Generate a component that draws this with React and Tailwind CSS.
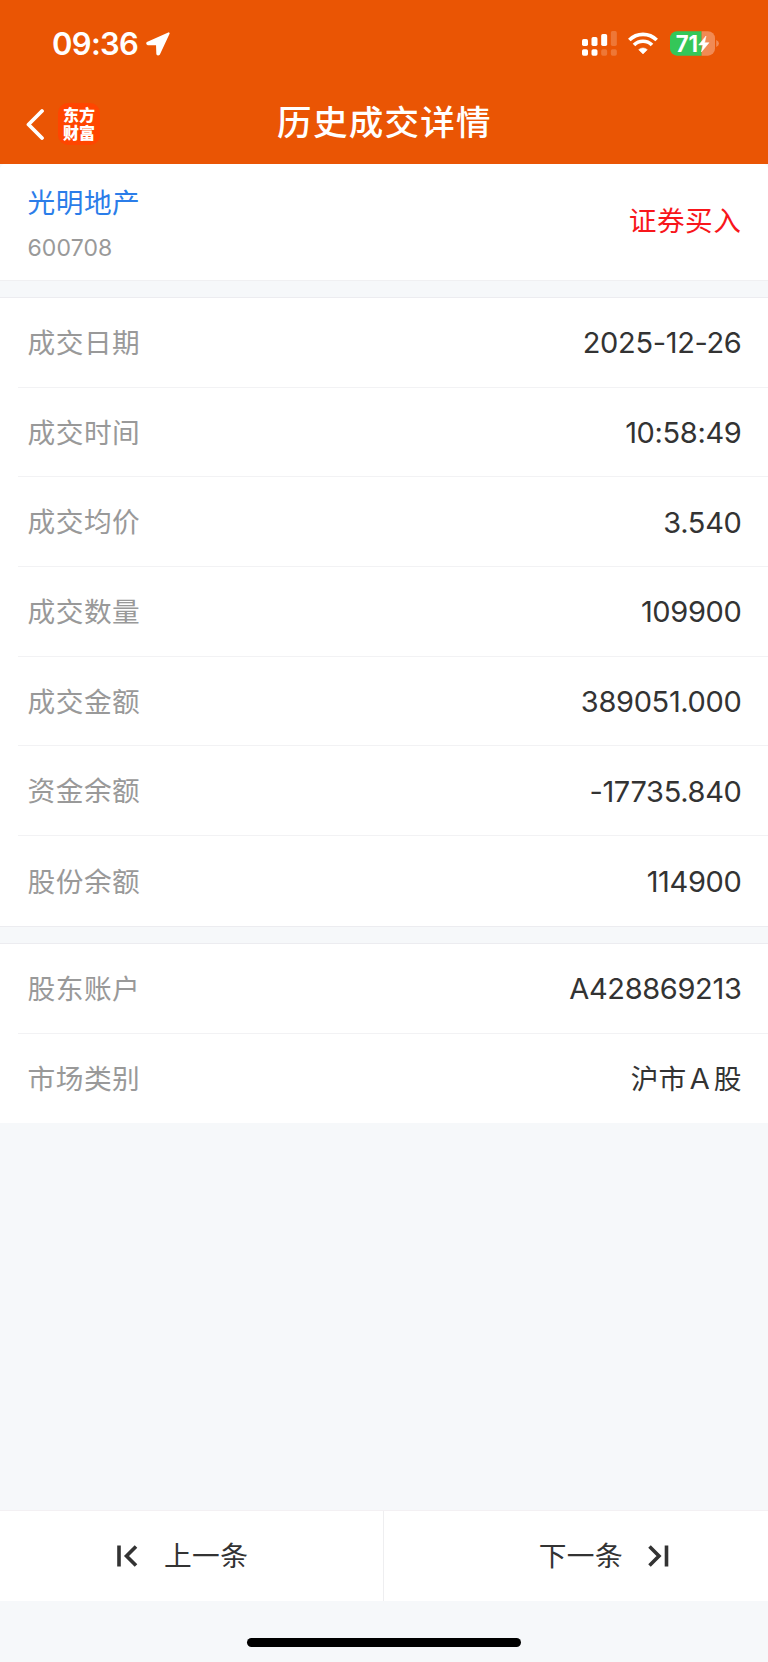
import React from 'react';

const tradeRows = [
  { label: '成交日期', value: '2025-12-26' },
  { label: '成交时间', value: '10:58:49' },
  { label: '成交均价', value: '3.540' },
  { label: '成交数量', value: '109900' },
  { label: '成交金额', value: '389051.000' },
  { label: '资金余额', value: '-17735.840' },
  { label: '股份余额', value: '114900' },
];

function SignalIcon() {
  return (
    <svg className="w-[35px] h-[25px]" viewBox="0 0 105 75" fill="#fff">
      <rect x="0" y="24" width="18" height="21" rx="5" />
      <rect x="28.5" y="18" width="18" height="27" rx="5" />
      <rect x="57.5" y="9" width="18" height="36" rx="5" />
      <rect x="86.5" y="0" width="18" height="45" rx="5" opacity="0.2" />
      <rect x="0" y="55" width="18" height="19" rx="5" />
      <rect x="28.5" y="55" width="18" height="19" rx="5" />
      <rect x="57.5" y="55" width="18" height="19" rx="5" opacity="0.2" />
      <rect x="86.5" y="55" width="18" height="19" rx="5" opacity="0.2" />
    </svg>
  );
}

function WifiIcon() {
  return (
    <svg className="ml-[11px] w-[30px] h-[23px]" viewBox="0 0 90 69" fill="none" stroke="#fff">
      <path d="M4 24 A58 58 0 0 1 86 24" strokeWidth="11" />
      <path d="M18 39 A38 38 0 0 1 72 39" strokeWidth="11" />
      <path d="M45 66 L32 53 A19 19 0 0 1 58 53 Z" fill="#fff" strokeWidth="1.500" strokeLinejoin="round" />
    </svg>
  );
}

function BatteryIcon() {
  return (
    <svg className="ml-[12px] w-[49px] h-[25px]" viewBox="0 0 147 75">
      <clipPath id="battery">
        <rect x="0" y="0.500" width="135" height="73.500" rx="21" />
      </clipPath>
      <g clipPath="url(#battery)">
        <rect width="95" height="75" fill="#34c759" />
        <rect x="95" width="40" height="75" fill="#f18a54" />
      </g>
      <path d="M138.500 27 Q147 31 147 37.500 Q147 44 138.500 48 Z" fill="#f18a54" />
      <text x="17" y="62" fill="#fff" fontFamily="Inter, sans-serif" fontWeight="700" fontSize="67" textLength="67" lengthAdjust="spacingAndGlyphs">71</text>
      <path d="M108 15 L86 42 H99 L94 63 L117 35 H104 Z" fill="#fff" stroke="#fff" strokeWidth="1.500" strokeLinejoin="round" />
    </svg>
  );
}

function Row({ label, value, last }) {
  return (
    <div className="pl-[18px]">
      <div className={`flex h-[89.7px] items-center justify-between pl-[9.500px] pr-[26.500px] ${last ? '' : 'border-b border-[#f2f2f4]'}`}>
        <span className="pt-[3px] text-[27.700px] tracking-[0.5px] text-[#999]">{label}</span>
        <span className="pt-[1px] text-[29px] tracking-[-0.34px] text-[#333]">{value}</span>
      </div>
    </div>
  );
}

export default function App() {
  return (
    <div className="flex h-[1662px] w-[768px] flex-col overflow-hidden bg-[#f6f8fa] font-[Inter,'Noto_Sans_CJK_SC',sans-serif] leading-none">
      {/* Status bar + title */}
      <header className="h-[163.5px] shrink-0 bg-[#ea5504] text-white">
        <div className="flex h-[87px] items-center justify-between pl-[52px] pr-[49px]">
          <div className="flex items-center gap-[8px]">
            <span className="text-[31px] font-semibold tracking-[-0.7px]">09:36</span>
            <svg className="w-[24px] h-[24px]" viewBox="0 0 72 72" fill="#fff" stroke="#fff" strokeWidth="6" strokeLinejoin="round">
              <path d="M68 4 L4 33 Q3 36 6 36.500 L33 37 L34 66 Q36 69 39 66 Z" />
            </svg>
          </div>
          <div className="flex items-center">
            <SignalIcon />
            <WifiIcon />
            <BatteryIcon />
          </div>
        </div>
        <div className="grid h-[73px] grid-cols-[1fr_auto_1fr] items-center">
          <div className="flex items-center gap-[13px] pl-[26px]">
            <svg className="w-[19px] h-[32px]" viewBox="0 0 19 32" fill="none" stroke="#fff" strokeWidth="3.800" strokeLinecap="round" strokeLinejoin="round">
              <path d="M16 3 L2.500 16.500 L16 30" />
            </svg>
            <div className="flex h-[42px] w-[42px] flex-col items-center justify-center rounded-[10px] bg-[#ff4500] text-[16px] font-black leading-[18px]">
              <span>东方</span>
              <span>财富</span>
            </div>
          </div>
          <h1 className="pl-[1px] text-[34.500px] font-medium tracking-[1.3px]">历史成交详情</h1>
          <div />
        </div>
      </header>

      {/* Stock */}
      <section className="flex h-[117px] shrink-0 items-center justify-between rounded-t-[5px] border-b border-[#f0f0f2] bg-white pl-[27.500px] pr-[26.500px]">
        <div className="flex flex-col gap-[19px] pt-[7px]">
          <span className="text-[27.700px] tracking-[0.5px] text-[#2b7de9]">光明地产</span>
          <span className="text-[23px] tracking-[0.1px] text-[#999]">600708</span>
        </div>
        <span className="pt-px text-[27.700px] tracking-[0.5px] text-[#f8161b]">证券买入</span>
      </section>

      <section className="mt-[16.500px] shrink-0 border-y border-[#ececf0] bg-white">
        {tradeRows.map((row, i) => (
          <Row key={row.label} label={row.label} value={row.value} last={i === tradeRows.length - 1} />
        ))}
      </section>

      <section className="mt-[16px] shrink-0 border-t border-[#ececf0] bg-white">
        <Row label="股东账户" value="A428869213" />
        <Row label="市场类别" value={<span className="text-[27.700px] tracking-[0px]">沪市Ａ股</span>} last />
      </section>

      {/* Prev / next */}
      <footer className="mt-auto shrink-0">
        <div className="flex h-[91px] border-t border-[#f3f0f3] bg-white text-[27.700px] tracking-[0.4px] text-[#333]">
          <button className="flex w-[384px] items-center gap-[26px] border-r border-[#eeeef0] pl-[117px]">
            <svg className="w-[21px] h-[22px]" viewBox="0 0 21 22" fill="none" stroke="#333" strokeWidth="3.600">
              <path d="M2 0.500 V21.500 M19 1.500 L9.500 11 L19 20.500" />
            </svg>
            <span className="pt-[2px]">上一条</span>
          </button>
          <button className="flex flex-1 items-center justify-end gap-[25px] pr-[99px]">
            <span className="pt-[2px]">下一条</span>
            <svg className="w-[21px] h-[22px]" viewBox="0 0 21 22" fill="none" stroke="#333" strokeWidth="3.600">
              <path d="M18.500 0.500 V21.500 M1.500 1.500 L11 11 L1.500 20.500" />
            </svg>
          </button>
        </div>
        <div className="flex h-[61px] justify-center pt-[37px]">
          <div className="h-[9px] w-[274px] rounded-full bg-black" />
        </div>
      </footer>
    </div>
  );
}
